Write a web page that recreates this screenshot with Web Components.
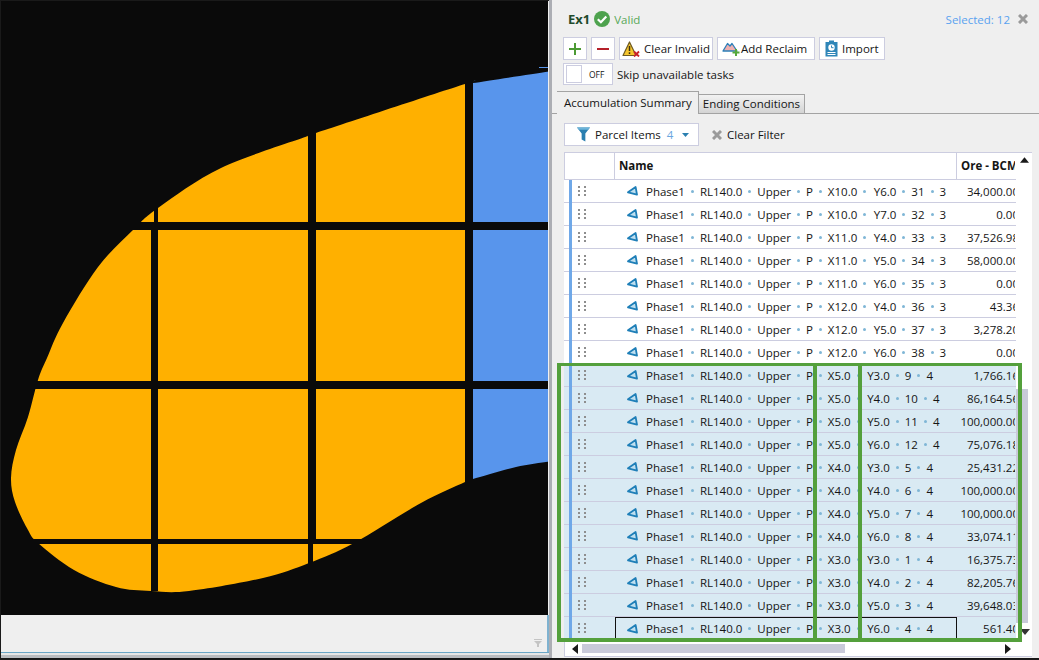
<!DOCTYPE html>
<html>
  <head>
    <title>Parcel sequence</title>
    <style>
      html,
      body {
        margin: 0;
        background: #efefef;
        overflow: hidden;
      }
    </style>
  </head>
  <body>
    <app-shell>
      <map-pane></map-pane>
      <task-panel></task-panel>
    </app-shell>

    <script>
      class AppShell extends HTMLElement {
        connectedCallback() {
          const shadow = this.attachShadow({ mode: "open" });
          shadow.innerHTML = `
          <style>
            :host {
              display: grid;
              grid-template-columns: 549px 490px;
              align-items: start;
              width: 1039px;
              height: 660px;
              background: #161616;
              outline: 1px solid #1a1a1a;
              outline-offset: -1px;
              font-family: "Open Sans", "Noto Sans", sans-serif;
              font-size: 11.5px;
              color: #151515;
            }
          </style>
          <slot></slot>`;
        }
      }

      // catmull-rom through the measured outline
      function smooth(points) {
        const p = points;
        let d = `M${p[0][0]} ${p[0][1]}`;
        for (let i = 0; i < p.length - 1; i++) {
          const a = p[Math.max(i - 1, 0)];
          const b = p[i];
          const c = p[i + 1];
          const e = p[Math.min(i + 2, p.length - 1)];
          const c1x = b[0] + (c[0] - a[0]) / 6;
          const c1y = b[1] + (c[1] - a[1]) / 6;
          const c2x = c[0] - (e[0] - b[0]) / 6;
          const c2y = c[1] - (e[1] - b[1]) / 6;
          d += `C${c1x} ${c1y} ${c2x} ${c2y} ${c[0]} ${c[1]}`;
        }
        return d + "Z";
      }

      const OUTLINE = [
        [552, 71], [473, 83], [465, 84], [316, 133], [308, 136], [221, 168], [158, 208],
        [133, 230], [98, 267], [63, 323], [47, 358], [38, 380], [28, 417], [16, 450],
        [11, 478], [15, 502], [28, 530], [38, 543], [74, 570], [116, 587], [151, 591],
        [189, 591], [263, 578], [309, 563], [354, 543], [421, 503], [465, 482], [473, 479],
        [516, 467], [552, 461],
      ];

      class MapPane extends HTMLElement {
        connectedCallback() {
          const shadow = this.attachShadow({ mode: "open" });
          shadow.innerHTML = `
          <style>
            :host {
              display: flex;
              flex-direction: column;
              height: 658px;
              background: #efefef;
            }
            svg {
              display: block;
              flex: none;
            }
            .strip {
              flex: none;
              height: 37px;
              display: flex;
              justify-content: flex-end;
              align-items: flex-end;
              padding: 0 4px 4px 0;
              box-sizing: border-box;
              border-right: 2px solid #7fb2d0;
            }
            .rule {
              flex: none;
              height: 1px;
              background: #6aa6c6;
            }
            .gap {
              flex: none;
              height: 2px;
              background: #e6e6e6;
            }
            .foot {
              flex: none;
              height: 3px;
              background: #b9bcc0;
            }
          </style>
          <svg width="549" height="615" viewBox="0 0 549 615" shape-rendering="crispEdges">
            <defs><clipPath id="blob"><path d="${smooth(OUTLINE)}"/></clipPath></defs>
            <rect width="549" height="615" fill="#0a0a0a"/>
            <g clip-path="url(#blob)">
              <rect width="469" height="615" fill="#ffb000"/>
              <rect x="469" width="80" height="615" fill="#5895ec"/>
            </g>
            <rect x="539" y="67" width="9" height="1" fill="#5895ec"/>
            <g fill="#0a0a0a">
              <rect x="154" y="190" width="4" height="34"/>
              <rect x="151" y="223" width="7" height="368"/>
              <rect x="308" y="120" width="8" height="424"/>
              <rect x="308" y="544" width="5" height="30"/>
              <rect x="465" y="70" width="8" height="415"/>
              <rect x="130" y="222" width="419" height="8"/>
              <rect x="20" y="381" width="529" height="8"/>
              <rect x="30" y="539" width="340" height="5"/>
            </g>
            <rect x="548" width="1" height="615" fill="#f0f0f0"/>
          </svg>
          <div class="strip">
            <svg width="9" height="9" viewBox="0 0 9 9"><path d="M0 0h8v1H0zM0 2h8L5 5v3H3V5z" fill="#c4c4c4"/></svg>
          </div>
          <div class="rule"></div>
          <div class="gap"></div>
          <div class="foot"></div>`;
        }
      }

      class ToolButton extends HTMLElement {
        connectedCallback() {
          const shadow = this.attachShadow({ mode: "open" });
          shadow.innerHTML = `
          <style>
            :host {
              display: inline-flex;
              align-items: center;
              justify-content: center;
              gap: 4px;
              box-sizing: border-box;
              height: 23px;
              padding: 0 3px;
              background: #fff;
              border: 1px solid #cccde0;
              white-space: nowrap;
            }
            ::slotted(svg) {
              display: block;
              flex: none;
            }
          </style>
          <slot name="icon"></slot><slot></slot>`;
        }
      }

      class ToggleSwitch extends HTMLElement {
        connectedCallback() {
          const shadow = this.attachShadow({ mode: "open" });
          shadow.innerHTML = `
          <style>
            :host {
              display: inline-flex;
              align-items: center;
              box-sizing: border-box;
              width: 50px;
              height: 22px;
              padding-left: 2px;
              background: #fff;
              border: 1px solid #cccde0;
            }
            .knob {
              width: 14px;
              height: 16px;
              background: #fff;
              border: 1px solid #cccde0;
            }
            .label {
              margin-left: 7px;
              font-size: 8.5px;
            }
          </style>
          <div class="knob"></div><div class="label"><slot></slot></div>`;
        }
      }

      class TabItem extends HTMLElement {
        connectedCallback() {
          const shadow = this.attachShadow({ mode: "open" });
          shadow.innerHTML = `
          <style>
            :host {
              display: flex;
              align-items: center;
              box-sizing: border-box;
              height: 19px;
              margin-left: -1px;
              padding: 0 4px 2px;
              border: 1px solid #a3a3a3;
              border-bottom: 0;
              background: linear-gradient(#f2f2f2, #d4d4d4);
              white-space: nowrap;
            }
            :host([active]) {
              height: 23px;
              margin-left: 0;
              padding: 0 6px 1px 7px;
              margin-bottom: -1px;
              background: #efefef;
              border-left: 0;
              position: relative;
            }
          </style>
          <slot></slot>`;
        }
      }

      class ChipTrail extends HTMLElement {
        connectedCallback() {
          const shadow = this.attachShadow({ mode: "open" });
          const parts = this.getAttribute("parts").split("|");
          const html = parts
            .map((p, i) => (i ? "<i></i>" : "") + `<span>${p}</span>`)
            .join("");
          shadow.innerHTML = `
          <style>
            :host {
              display: flex;
              align-items: center;
              white-space: nowrap;
            }
            i {
              flex: none;
              width: 3px;
              height: 3px;
              margin: 0 6px;
              border-radius: 50%;
              background: #7fb6d6;
            }
            i:nth-of-type(5) {
              margin-right: 7.5px;
            }
          </style>
          ${html}`;
        }
      }

      class ParcelRow extends HTMLElement {
        connectedCallback() {
          const shadow = this.attachShadow({ mode: "open" });
          shadow.innerHTML = `
          <style>
            :host {
              display: grid;
              grid-template-columns: 51px 342px 58px;
              flex: none;
              height: 23px;
              box-sizing: border-box;
              background: #fff;
              border-bottom: 1px solid #cccde0;
            }
            :host([selected]) {
              background: #d9eaf3;
            }
            .grip {
              display: flex;
              align-items: stretch;
              padding-left: 5px;
            }
            .grip b {
              width: 3px;
              background: #6fa8e8;
              margin-bottom: -1px;
            }
            .grip svg {
              margin: 6px 0 0 6px;
            }
            .name {
              display: flex;
              align-items: center;
              gap: 8px;
              padding-left: 12px;
              overflow: hidden;
              box-sizing: border-box;
            }
            :host([current]) .name {
              box-shadow: inset 0 0 0 1px #111;
              margin-bottom: -1px;
            }
            .ore {
              overflow: hidden;
              display: flex;
              justify-content: flex-end;
              align-items: center;
              white-space: nowrap;
            }
            .ore span {
              margin-right: -4px;
            }
          </style>
          <div class="grip">
            <b></b>
            <svg width="8" height="11" viewBox="0 0 8 11" fill="#8e8e8e">
              <rect x="0" y="0" width="2" height="2"/><rect x="6" y="0" width="2" height="2"/>
              <rect x="0" y="4" width="2" height="2"/><rect x="6" y="4" width="2" height="2"/>
              <rect x="0" y="8" width="2" height="2"/><rect x="6" y="8" width="2" height="2"/>
            </svg>
          </div>
          <div class="name">
            <svg width="11" height="10" viewBox="0 0 11 10" style="flex:none">
              <path d="M1 6.3 8.6 1 10 8.7z" fill="#bfe0f0" stroke="#1f7fb8" stroke-width="1.8" stroke-linejoin="round"/>
            </svg>
            <chip-trail parts="${this.getAttribute("parts")}"></chip-trail>
          </div>
          <div class="ore"><span>${this.getAttribute("ore")}</span></div>`;
        }
      }

      const ROWS = [
        ["X10.0", "Y6.0", 31, 3, "34,000.00"],
        ["X10.0", "Y7.0", 32, 3, "0.00"],
        ["X11.0", "Y4.0", 33, 3, "37,526.98"],
        ["X11.0", "Y5.0", 34, 3, "58,000.00"],
        ["X11.0", "Y6.0", 35, 3, "0.00"],
        ["X12.0", "Y4.0", 36, 3, "43.36"],
        ["X12.0", "Y5.0", 37, 3, "3,278.20"],
        ["X12.0", "Y6.0", 38, 3, "0.00"],
        ["X5.0", "Y3.0", 9, 4, "1,766.16"],
        ["X5.0", "Y4.0", 10, 4, "86,164.56"],
        ["X5.0", "Y5.0", 11, 4, "100,000.00"],
        ["X5.0", "Y6.0", 12, 4, "75,076.18"],
        ["X4.0", "Y3.0", 5, 4, "25,431.22"],
        ["X4.0", "Y4.0", 6, 4, "100,000.00"],
        ["X4.0", "Y5.0", 7, 4, "100,000.00"],
        ["X4.0", "Y6.0", 8, 4, "33,074.11"],
        ["X3.0", "Y3.0", 1, 4, "16,375.73"],
        ["X3.0", "Y4.0", 2, 4, "82,205.76"],
        ["X3.0", "Y5.0", 3, 4, "39,648.03"],
        ["X3.0", "Y6.0", 4, 4, "561.40"],
      ];

      class TaskPanel extends HTMLElement {
        connectedCallback() {
          const shadow = this.attachShadow({ mode: "open" });
          const rows = ROWS.map((r, i) => {
            const parts = ["Phase1", "RL140.0", "Upper", "P", r[0], r[1], r[2], r[3]].join("|");
            const state = (i >= 8 ? " selected" : "") + (i === 19 ? " current" : "");
            return `<parcel-row parts="${parts}" ore="${r[4]}"${state}></parcel-row>`;
          }).join("");
          shadow.innerHTML = `
          <style>
            :host {
              display: flex;
              flex-direction: column;
              height: 658px;
              position: relative;
              background: #efefef;
              border-left: 3px solid #acaeb4;
              box-sizing: border-box;
            }
            .title {
              flex: none;
              height: 37px;
              display: flex;
              align-items: center;
              padding: 1px 11px 0 16px;
              box-sizing: border-box;
            }
            .title strong {
              color: #1f4a2c;
              font-size: 13px;
            }
            .title svg {
              margin-left: 4px;
            }
            .valid {
              margin-left: 4px;
              color: #58a858;
            }
            .count {
              margin-left: auto;
              color: #5aa2f0;
            }
            .count + svg {
              margin-left: 8px;
            }
            .tools {
              flex: none;
              display: flex;
              gap: 4px;
              margin-left: 11px;
            }
            .square {
              width: 24px;
            }
            .skip {
              flex: none;
              display: flex;
              align-items: center;
              gap: 4px;
              margin: 3px 0 0 11px;
            }
            .tabs {
              flex: none;
              display: flex;
              align-items: flex-end;
              height: 23px;
              margin-top: 5px;
              padding-left: 5px;
              border-bottom: 1px solid #a3a3a3;
            }
            .filters {
              flex: none;
              display: flex;
              align-items: center;
              margin: 9px 0 0 12px;
              gap: 13px;
            }
            .parcel {
              width: 135px;
              height: 23px;
              gap: 5px;
              padding-left: 12px;
              justify-content: flex-start;
            }
            .parcel em {
              font-style: normal;
              color: #6aa6e0;
              margin-left: 1px;
            }
            .clear {
              display: flex;
              align-items: center;
              gap: 5px;
            }
            .table {
              flex: none;
              margin: 6px 0 0 12px;
              width: 468px;
              height: 505px;
              background: #fff;
              border: 1px solid #cccde0;
              border-width: 1px 0 1px 1px;
              box-sizing: border-box;
              display: grid;
              grid-template-columns: 451px 16px;
              grid-template-rows: 27px 462px 14px;
            }
            .head {
              display: grid;
              grid-template-columns: 50px 342px 58px;
              border-bottom: 1px solid #cccde0;
              font-weight: 700;
            }
            .head div {
              display: flex;
              align-items: center;
              padding: 0 0 2px 4px;
              overflow: hidden;
              white-space: nowrap;
              border-right: 1px solid #cccde0;
              box-sizing: border-box;
            }
            .head div:first-child {
              padding: 0;
            }
            .head div:last-child {
              border: 0;
            }
            .sort {
              display: flex;
              justify-content: center;
              padding-top: 4px;
              box-sizing: border-box;
            }
            .body {
              display: flex;
              flex-direction: column;
              overflow: hidden;
              margin-left: -1px;
            }
            .vbar {
              grid-row: 2;
              grid-column: 2;
              display: flex;
              flex-direction: column;
              padding-top: 209px;
            }
            .vthumb {
              width: 12px;
              height: 234px;
              background: #c9cada;
              flex: none;
            }
            .vbar svg {
              margin: 6px 0 0 4px;
            }
            .hbar {
              grid-row: 3;
              grid-column: 1 / 3;
              display: flex;
              align-items: center;
              padding-left: 7px;
            }
            .hthumb {
              width: 263px;
              height: 9px;
              margin: 0 0 1px 4px;
              background: #c9cada;
            }
            .hbar svg:last-child {
              margin-left: 160px;
            }
            .notes {
              position: absolute;
              left: 5px;
              top: 363px;
              width: 465px;
              height: 279px;
              box-sizing: border-box;
              border: 4px solid #54a03c;
              border-top-width: 3px;
              pointer-events: none;
            }
            .notes i {
              position: absolute;
              top: 0;
              bottom: 0;
              width: 4px;
              background: #54a03c;
            }
          </style>
          <div class="title">
            <strong>Ex1</strong>
            <svg width="16" height="16" viewBox="0 0 16 16">
              <circle cx="8" cy="8" r="8" fill="#4ea24e"/>
              <path d="M3.8 8.2 6.9 11.2 12.3 5.4" fill="none" stroke="#fff" stroke-width="2.2"/>
            </svg>
            <span class="valid">Valid</span>
            <span class="count">Selected: 12</span>
            <svg width="10" height="10" viewBox="0 0 10 10">
              <path d="M1 1 9 9M9 1 1 9" stroke="#9a9a9a" stroke-width="3"/>
            </svg>
          </div>
          <div class="tools">
            <tool-button class="square">
              <svg slot="icon" width="12" height="12" viewBox="0 0 12 12"><path d="M6 0v12M0 6h12" stroke="#4c9a34" stroke-width="2"/></svg>
            </tool-button>
            <tool-button class="square">
              <svg slot="icon" width="12" height="12" viewBox="0 0 12 12"><path d="M0 6h12" stroke="#b5202a" stroke-width="2"/></svg>
            </tool-button>
            <tool-button style="width:94px">
              <svg slot="icon" width="18" height="16" viewBox="0 0 18 16">
                <path d="M7.5 1 1 14.5h13z" fill="#f5c52e" stroke="#6e5a22" stroke-width="1.2" stroke-linejoin="round"/>
                <path d="M7.5 5v5M7.5 11.3v1.6" stroke="#3c3010" stroke-width="1.5"/>
                <path d="M12 10.5l5 5M17 10.5l-5 5" stroke="#c8242c" stroke-width="1.8"/>
              </svg>
              Clear Invalid
            </tool-button>
            <tool-button style="width:98px;gap:1px;justify-content:flex-start;padding-left:4px">
              <svg slot="icon" width="18" height="15" viewBox="0 0 18 15">
                <path d="M1 10 5.5 2.5 8 5 10 2.5 15 10z" fill="#efb0b0" stroke="#2c7fb8" stroke-width="1.3" stroke-linejoin="round"/>
                <path d="M14 8v7M10.5 11.5h7" stroke="#55a83c" stroke-width="2"/>
              </svg>
              Add Reclaim
            </tool-button>
            <tool-button style="width:66px;gap:3px;justify-content:flex-start;padding-left:5px">
              <svg slot="icon" width="14" height="17" viewBox="0 0 14 17">
                <rect x=".5" y="2" width="12" height="14.5" fill="#2f86b8"/>
                <rect x="4" y=".5" width="5" height="3" fill="#2f86b8"/>
                <circle cx="6.5" cy="7.5" r="3.2" fill="#fff"/>
                <path d="M6.5 5.5v2.2h2" stroke="#2f86b8" fill="none"/>
                <path d="M2.5 12.5h8M2.5 14.5h8" stroke="#fff"/>
              </svg>
              Import
            </tool-button>
          </div>
          <div class="skip">
            <toggle-switch>OFF</toggle-switch>
            <span>Skip unavailable tasks</span>
          </div>
          <div class="tabs">
            <tab-item active>Accumulation Summary</tab-item>
            <tab-item>Ending Conditions</tab-item>
          </div>
          <div class="filters">
            <tool-button class="parcel">
              <svg slot="icon" width="13" height="15" viewBox="0 0 14 15">
                <path d="M0 0h14L9 6.5V15l-4-2V6.5z" fill="#2a7fb0"/>
                <path d="M0 0h14l-2 2.5H2z" fill="#6db4da"/>
              </svg>
              <span>Parcel Items</span><em>4</em>
              <svg width="7" height="4" viewBox="0 0 7 4" style="margin-left:4px"><path d="M0 0h7L3.5 4z" fill="#2a7fb0"/></svg>
            </tool-button>
            <span class="clear">
              <svg width="10" height="10" viewBox="0 0 10 10"><path d="M1 1 9 9M9 1 1 9" stroke="#9a9a9a" stroke-width="3"/></svg>
              Clear Filter
            </span>
          </div>
          <div class="table">
            <div class="head"><div></div><div>Name</div><div>Ore - BCM</div></div>
            <div class="sort">
              <svg width="9" height="6" viewBox="0 0 10 6"><path d="M0 6 5 0l5 6z" fill="#1a1a1a"/></svg>
            </div>
            <div class="body">${rows}</div>
            <div class="vbar">
              <div class="vthumb"></div>
              <svg width="10" height="6" viewBox="0 0 10 6"><path d="M0 0h10L5 6z" fill="#333"/></svg>
            </div>
            <div class="hbar">
              <svg width="6" height="10" viewBox="0 0 6 10"><path d="M6 0v10L0 5z" fill="#1a1a1a"/></svg>
              <div class="hthumb"></div>
              <svg width="6" height="10" viewBox="0 0 6 10"><path d="M0 0v10l6-5z" fill="#1a1a1a"/></svg>
            </div>
          </div>
          <div class="notes">
            <i style="left:252px"></i>
            <i style="left:297px"></i>
          </div>`;
        }
      }

      customElements.define("app-shell", AppShell);
      customElements.define("map-pane", MapPane);
      customElements.define("tool-button", ToolButton);
      customElements.define("toggle-switch", ToggleSwitch);
      customElements.define("tab-item", TabItem);
      customElements.define("chip-trail", ChipTrail);
      customElements.define("parcel-row", ParcelRow);
      customElements.define("task-panel", TaskPanel);
    </script>
  </body>
</html>
